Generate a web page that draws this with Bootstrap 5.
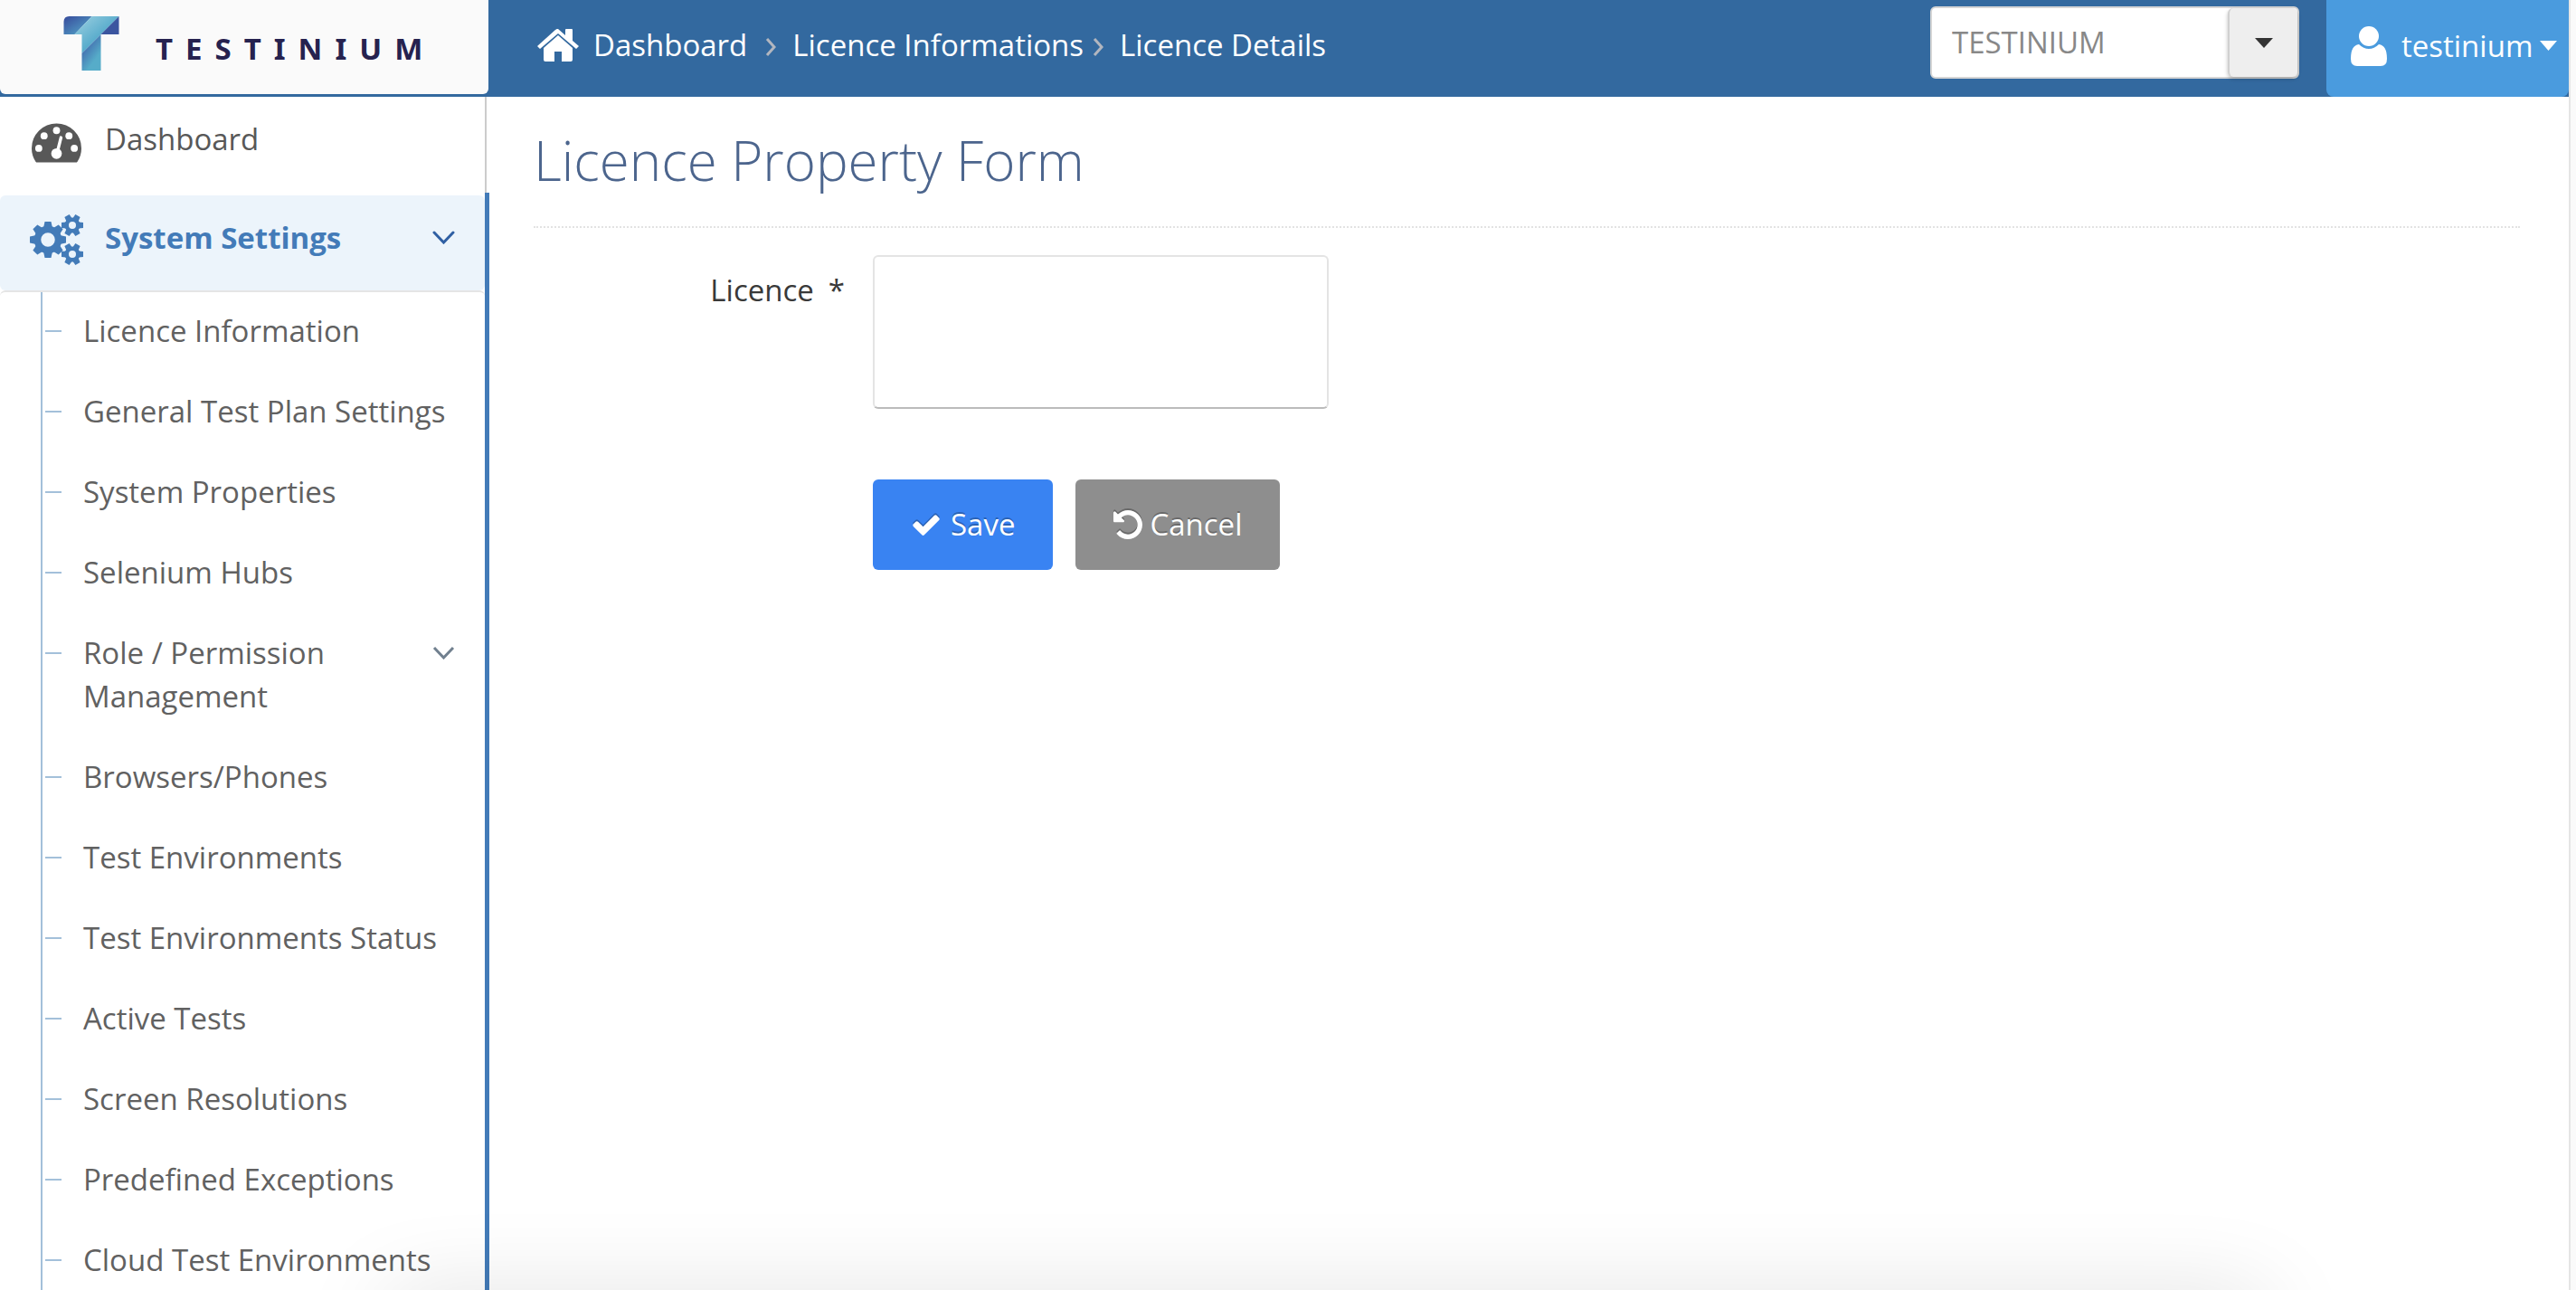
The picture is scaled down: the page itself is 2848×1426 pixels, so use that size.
<!DOCTYPE html>
<html lang="en">
<head>
<meta charset="utf-8">
<meta name="viewport" content="width=device-width, initial-scale=1">
<title>Testinium - Licence Property Form</title>
<link href="https://cdn.jsdelivr.net/npm/bootstrap@5.3.0/dist/css/bootstrap.min.css" rel="stylesheet">
<style>
  body{font-family:"Open Sans","Noto Sans",sans-serif;font-size:33px;line-height:48px;color:#393939;background:#fafafa}
  a{text-decoration:none}
  svg{display:block;flex:none}
  .shell{height:100vh;margin-right:6px;background:#fff;border-right:2px solid #e5e5e5;overflow:hidden}
  .topbar{height:107px;background:#33699f;flex:none}
  .brand{width:540px;height:104px;padding-left:70px;background:#fafafa;border-radius:0 0 6px 6px;gap:40px}
  .brand-name{font-family:"Noto Sans",sans-serif;font-weight:700;font-size:33px;letter-spacing:14px;color:#26224f;padding-top:4px}
  .crumbs{padding-left:54px;height:100px;color:#fff}
  .crumbs a,.crumbs span{color:#fff}
  .sep{margin:4px 18px 0 10px}
  .sep-first{margin-left:20px}
  .tenant{width:408px;height:80px;margin:7px 30px 0 0}
  .tenant select{appearance:none;font-size:33px;color:#888;border:2px solid #d5d5d5;border-radius:6px;padding:0 90px 0 22px;background:#fff}
  .tenant-drop{position:absolute;top:2px;right:2px;bottom:2px;width:77px;background:#eee;border-left:2px solid #d0d0d0;border-radius:6px;box-shadow:0 2px 4px rgba(0,0,0,.25);pointer-events:none}
  .account{width:268px;height:107px;padding:0 0 6px 27px;background:#4a9bde;color:#fff;border:0;border-radius:0 0 8px 8px;gap:16px}
  .side{width:541px;overflow-y:auto;scrollbar-width:none}
  .side-top{width:538px;height:106px;padding:0 0 12px 35px;gap:26px;color:#585858;border-right:2px solid #ccc}
  .settings{border-right:5px solid #437bb8;border-radius:3px 0 0 0;padding-top:3px}
  .side-open{height:105px;padding:0 33px 12px 33px;gap:23px;background:#ecf4fb;border-radius:6px;color:#437bb8;font-weight:700}
  .submenu{border-top:2px solid #e5e5e5;border-radius:6px 6px 0 0;padding:0 0 0 45px;margin:0;list-style:none}
  .submenu ul{border-left:2px solid #a3c0da;padding:0;margin:0;list-style:none}
  .submenu a{display:flex;color:#616161;padding:19px 33px 22px 3px}
  .submenu li:last-child a{padding-bottom:10px}
  .submenu a::before{content:"";flex:none;width:18px;margin:23px 24px 0 0;border-top:2px solid #a3c0da;height:0}
  .page-body{padding:30px 54px 0 49px;flex:1}
  .page-title{font-weight:300;font-size:60px;line-height:80px;color:#4c658d;padding-bottom:33px;margin-bottom:30px;border-bottom:2px dotted #e2e2e2}
  .field-label{width:344px;justify-content:flex-end;gap:16px;padding-top:15px;margin-right:31px}
  .licence-box{width:504px;height:170px;border:2px solid #e4e4e4;border-bottom-color:#bbb;border-radius:6px;resize:none;font-size:33px}
  .actions{padding-left:375px;margin-top:78px;gap:25px}
  .act{height:100px;font-size:33px;line-height:48px;color:#fff;border:0;border-radius:6px;padding:0 42px;text-shadow:0 -2px 0 rgba(0,0,0,.25)}
  .act svg{filter:drop-shadow(0 -2px 0 rgba(0,0,0,.25))}
  .act-save{background:#3983f2;gap:10px}
  .act-cancel{background:#8e8e8e;gap:8px}
  .floor-shade{position:fixed;left:15%;right:12%;top:100vh;height:60px;box-shadow:0 10px 100px 0 rgba(0,0,0,.15);border-radius:20px;pointer-events:none}
</style>
<script src="https://cdn.jsdelivr.net/npm/bootstrap@5.3.0/dist/js/bootstrap.bundle.min.js"></script>
</head>
<body>
<div class="shell d-flex flex-column">
  <header class="topbar d-flex">
    <a class="brand d-flex align-items-center" href="#">
      <svg width="62" height="60" viewBox="0 0 61 60" class="mb-2" aria-hidden="true">
        <defs>
          <linearGradient id="lg-dark" x1="0" y1="0" x2="1" y2="1"><stop offset="0.1" stop-color="#3a54a0"/><stop offset="0.9" stop-color="#53a3c8"/></linearGradient>
          <linearGradient id="lg-light" x1="0" y1="0" x2="1" y2="1"><stop offset="0.1" stop-color="#93cbde"/><stop offset="0.6" stop-color="#53a9ca"/></linearGradient>
          <linearGradient id="lg-stem" x1="0" y1="0" x2="0.7" y2="1"><stop offset="0.2" stop-color="#3f62aa"/><stop offset="0.8" stop-color="#56acc9"/></linearGradient>
        </defs>
        <path d="M6 0H31L12 20H0V6Q0 0 6 0Z" fill="url(#lg-dark)"/>
        <path d="M31 0H61L20 41V20H12Z" fill="url(#lg-light)"/>
        <path d="M61 0V20H41Z" fill="#3b559f"/>
        <path d="M41 20V60H20V41Z" fill="url(#lg-stem)"/>
      </svg>
      <span class="brand-name">TESTINIUM</span>
    </a>
    <nav class="crumbs d-flex align-items-center" aria-label="breadcrumb">
      <svg width="46" height="36" viewBox="0 0 46 36" fill="#fff" aria-hidden="true"><path d="M23 0 31 7V1Q31 0 32 0H38Q39 0 39 1V13L46 19 43 22 23 5 3 22 0 19 20 1Q23-1 23 0Z"/><path d="M23 7 39 21V34Q39 36 37 36H27V25H19V36H9Q7 36 7 34V21Z"/></svg>
      <a href="#" class="ms-3">Dashboard</a>
      <svg class="sep sep-first" width="12" height="20" viewBox="0 0 12 20" fill="none" stroke="#b2b6bf" stroke-width="3" aria-hidden="true"><path d="M2 1 10 10 2 19"/></svg>
      <a href="#">Licence Informations</a>
      <svg class="sep" width="12" height="20" viewBox="0 0 12 20" fill="none" stroke="#b2b6bf" stroke-width="3" aria-hidden="true"><path d="M2 1 10 10 2 19"/></svg>
      <span aria-current="page">Licence Details</span>
    </nav>
    <div class="tenant position-relative ms-auto">
      <select class="w-100 h-100" aria-label="Company"><option>TESTINIUM</option></select>
      <div class="tenant-drop d-flex align-items-center justify-content-center"><svg width="20" height="11" viewBox="0 0 20 11" aria-hidden="true"><path d="M0 0H20L10 11Z" fill="#333"/></svg></div>
    </div>
    <button type="button" class="account d-flex align-items-center">
      <svg width="40" height="44" viewBox="0 0 40 44" fill="#fff" aria-hidden="true"><ellipse cx="20" cy="11" rx="11" ry="11"/><path d="M9 20Q14 25 20 25T31 20Q40 21 40 36Q40 44 33 44H7Q0 44 0 36Q0 21 9 20Z"/></svg>
      <span class="d-flex align-items-center gap-2">testinium <svg width="19" height="11" viewBox="0 0 19 11" aria-hidden="true"><path d="M0 0H19L9.500 11Z" fill="#fff"/></svg></span>
    </button>
  </header>

  <div class="d-flex flex-fill overflow-hidden">
    <aside class="side flex-shrink-0">
      <a href="#" class="side-top d-flex align-items-center">
        <svg class="mt-2" width="55" height="44" viewBox="0 0 56 44" aria-hidden="true"><path fill="#585858" d="M28 0A28 28 0 0 1 56 28Q56 36 51.500 43Q51 44 49.500 44H6.500Q5 44 4.500 43Q0 36 0 28A28 28 0 0 1 28 0Z"/><g fill="#fff"><circle cx="28" cy="8" r="4"/><circle cx="14" cy="14" r="4"/><circle cx="42" cy="14" r="4"/><circle cx="8" cy="28" r="4"/><circle cx="48" cy="28" r="4"/><circle cx="28" cy="34" r="6"/></g><path d="M33 16 28.500 34" stroke="#fff" stroke-width="3.500" stroke-linecap="round"/></svg>
        <span>Dashboard</span>
      </a>
      <div class="settings">
        <a href="#" class="side-open d-flex align-items-center">
          <svg class="mt-1" width="60" height="58" viewBox="0 -2 60 58" fill="#437bb8" aria-hidden="true">
            <defs>
              <path id="tooth-l" d="M-5-13-3.500-20H3.500L5-13Z"/>
              <path id="tooth-s" d="M-7-3.500-12-3V3L-7 3.500Z"/>
              <g id="gear-s"><circle r="6.300" fill="none" stroke="#437bb8" stroke-width="4.600"/><use href="#tooth-s"/><use href="#tooth-s" transform="rotate(60)"/><use href="#tooth-s" transform="rotate(120)"/><use href="#tooth-s" transform="rotate(180)"/><use href="#tooth-s" transform="rotate(240)"/><use href="#tooth-s" transform="rotate(300)"/></g>
            </defs>
            <g transform="translate(20 27)"><circle r="11.500" fill="none" stroke="#437bb8" stroke-width="7.500"/><use href="#tooth-l"/><use href="#tooth-l" transform="rotate(45)"/><use href="#tooth-l" transform="rotate(90)"/><use href="#tooth-l" transform="rotate(135)"/><use href="#tooth-l" transform="rotate(180)"/><use href="#tooth-l" transform="rotate(225)"/><use href="#tooth-l" transform="rotate(270)"/><use href="#tooth-l" transform="rotate(315)"/></g>
            <use href="#gear-s" x="47" y="11"/><use href="#gear-s" x="47" y="43"/>
          </svg>
          <span class="flex-fill">System Settings</span>
          <svg width="25" height="15" viewBox="0 0 25 15" fill="none" stroke="#2f5fa3" stroke-width="3" stroke-linecap="round" aria-hidden="true"><path d="M2 2 12.500 13 23 2"/></svg>
        </a>
        <div class="submenu">
          <ul>
            <li><a href="#">Licence Information</a></li>
            <li><a href="#">General Test Plan Settings</a></li>
            <li><a href="#">System Properties</a></li>
            <li><a href="#">Selenium Hubs</a></li>
            <li><a href="#"><span class="flex-fill">Role / Permission Management</span><svg class="mt-3" width="25" height="15" viewBox="0 0 25 15" fill="none" stroke="#71808f" stroke-width="3" aria-hidden="true"><path d="M2 2 12.500 13 23 2"/></svg></a></li>
            <li><a href="#">Browsers/Phones</a></li>
            <li><a href="#">Test Environments</a></li>
            <li><a href="#">Test Environments Status</a></li>
            <li><a href="#">Active Tests</a></li>
            <li><a href="#">Screen Resolutions</a></li>
            <li><a href="#">Predefined Exceptions</a></li>
            <li><a href="#">Cloud Test Environments</a></li>
          </ul>
        </div>
      </div>
    </aside>

    <main class="page-body">
      <h1 class="page-title">Licence Property Form</h1>
      <form>
        <div class="d-flex">
          <label class="field-label d-flex" for="licence"><span>Licence</span><span>*</span></label>
          <textarea class="licence-box" id="licence" required></textarea>
        </div>
        <div class="actions d-flex">
          <button type="submit" class="act act-save d-flex align-items-center">
            <svg width="34" height="34" viewBox="0 0 1792 1792" fill="#fff" aria-hidden="true"><path d="M1671 566q0 40-28 68l-724 724-136 136q-28 28-68 28t-68-28l-136-136-362-362q-28-28-28-68t28-68l136-136q28-28 68-28t68 28l294 295 656-657q28-28 68-28t68 28l136 136q28 28 28 68z"/></svg>
            <span>Save</span>
          </button>
          <button type="button" class="act act-cancel d-flex align-items-center">
            <svg width="32" height="32" viewBox="128 128 1536 1536" fill="#fff" aria-hidden="true"><path d="M1664 896q0 156-61 298t-164 245-245 164-298 61q-172 0-327-72.500t-264-204.500q-7-10-6.500-22.500t8.500-20.500l137-138q10-9 25-9 16 2 23 12 73 95 179 147t225 52q104 0 198.500-40.500t163.500-109.500 109.500-163.500 40.500-198.500-40.500-198.500-109.500-163.500-163.500-109.500-198.500-40.500q-98 0-188 35.500t-160 101.500l137 138q31 30 14 69-17 40-59 40h-448q-26 0-45-19t-19-45v-448q0-42 40-59 39-17 69 14l130 129q107-101 244.500-156.500t284.500-55.500q156 0 298 61t245 164 164 245 61 298z"/></svg>
            <span>Cancel</span>
          </button>
        </div>
      </form>
    </main>
  </div>
</div>
<div class="floor-shade"></div>
</body>
</html>
